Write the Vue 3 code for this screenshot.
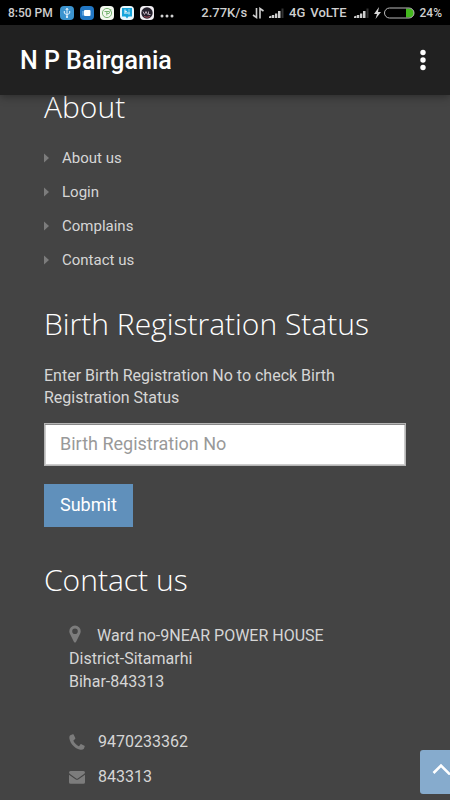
<script setup>
import { ref } from 'vue'

const registrationNo = ref('')
const links = ['About us', 'Login', 'Complains', 'Contact us']
</script>

<template>
  <div class="screen">
    <div class="status-bar">
      <div class="status-left">
        <span class="clock">8:50 PM</span>
        <svg class="app-icon" viewBox="0 0 14 14">
          <rect width="14" height="14" rx="4" fill="#3c94cf" />
          <path d="M7 11.5V2.5M5.8 4 7 2.2 8.2 4M4.3 5v2c0 1 2.7 1 2.7 2.2M9.7 5v2c0 1-2.7 1-2.7 2.2" fill="none" stroke="#e8f5ff" stroke-width="1" />
          <circle cx="7" cy="11" r="1.1" fill="#e8f5ff" />
        </svg>
        <svg class="app-icon" viewBox="0 0 14 14">
          <rect width="14" height="14" rx="4" fill="#2277c4" />
          <rect x="4" y="4" width="6.500" height="6" rx="1" fill="#fff" />
          <path d="M3 9.500V5" stroke="#9fd0f5" stroke-width="1" />
        </svg>
        <svg class="app-icon" viewBox="0 0 14 14">
          <rect width="14" height="14" rx="4" fill="#f3f8ef" />
          <circle cx="7" cy="7" r="4.600" fill="none" stroke="#79b574" stroke-width="1" />
          <path d="M4.500 5.500H9M6.800 5.500V9.500M6.800 7.500H9L11 3" fill="none" stroke="#79b574" stroke-width="1" />
        </svg>
        <svg class="app-icon" viewBox="0 0 14 14">
          <rect width="14" height="14" rx="4" fill="#e9f7fd" />
          <path d="M2 2h10v8.500H8.500L7 12.500 5.500 10.500H2z" fill="#16a5dc" />
          <path d="M5 3.500V8M5 6q2-1.500 2 .3V8M9 5.500V8.500M9 3.500v1" fill="none" stroke="#fff" stroke-width="1" />
        </svg>
        <svg class="app-icon" viewBox="0 0 14 14">
          <rect width="14" height="14" rx="4" fill="#f1eef2" />
          <circle cx="7" cy="7" r="5.700" fill="#25212d" />
          <path d="M3 5.500 4.500 8.500 6 5.500 7.500 8.500M8.500 5.500v3h2" fill="none" stroke="#b7a9b5" stroke-width="1" />
          <path d="M4 10.500q3 1.500 6 0" fill="none" stroke="#a64b58" stroke-width="1" />
        </svg>
        <svg class="more-dots" viewBox="0 0 14 14">
          <g fill="#d0d0d0"><circle cx="2" cy="10" r="1.500" /><circle cx="7" cy="10" r="1.500" /><circle cx="12" cy="10" r="1.500" /></g>
        </svg>
      </div>
      <div class="status-right">
        <span class="network">2.77K/s</span>
        <svg class="arrows" viewBox="0 0 12 12">
          <path d="M4.500 1V10.500L1 8M8 11.500V1.500L11.500 4" fill="none" stroke="#cfcfcf" stroke-width="1.600" />
        </svg>
        <svg class="signal" viewBox="0 0 15 12">
          <path d="M0 9.500 2.500 8.500V11H0zM3 8h2.300v3H3zM6 6.500h2.300V11H6zM9 4h2.500v7H9z" fill="#cfcfcf" />
          <path d="M12.500 1.500h2V11h-2z" fill="#333" />
        </svg>
        <span class="network">4G</span>
        <span class="network">VoLTE</span>
        <svg class="signal second" viewBox="0 0 15 12">
          <path d="M0 9.500 2.500 8.500V11H0zM3 8h2.300v3H3zM6 6.500h2.300V11H6zM9 4h2.500v7H9z" fill="#cfcfcf" />
          <path d="M12.500 1.500h2V11h-2z" fill="#333" />
        </svg>
        <svg class="battery" viewBox="0 0 41 12">
          <path d="M5 0 0 7h3L1.500 12 7 5H4z" fill="#d8d8d8" />
          <path d="M32 1.500h3.500a4.500 4.500 0 0 1 0 9H32z" fill="#43b81d" />
          <rect x="10.500" y="1" width="29.500" height="10" rx="5" fill="none" stroke="#b9b9b9" stroke-width="1" />
        </svg>
        <span>24%</span>
      </div>
    </div>

    <header class="app-bar">
      <div class="app-title">N P Bairgania</div>
      <button class="menu-button" type="button" aria-label="More options">
        <svg viewBox="0 0 6 22">
          <g fill="#fff"><circle cx="3" cy="3.500" r="2.700" /><circle cx="3" cy="11" r="2.700" /><circle cx="3" cy="18.500" r="2.700" /></g>
        </svg>
      </button>
    </header>

    <main class="content">
      <section>
        <h2>About</h2>
        <ul class="links">
          <li v-for="link in links" :key="link">
            <svg class="caret" viewBox="0 0 5 10"><path d="M0 0.500 5 5 0 9.500z" fill="#7c7c7c" /></svg>
            <a href="#">{{ link }}</a>
          </li>
        </ul>
      </section>

      <section>
        <h2>Birth Registration Status</h2>
        <form class="status-form" @submit.prevent>
          <label for="registration-no">Enter Birth Registration No to check Birth Registration Status</label>
          <input id="registration-no" v-model="registrationNo" type="text" placeholder="Birth Registration No" />
          <button class="submit" type="submit">Submit</button>
        </form>
      </section>

      <section>
        <h2>Contact us</h2>
        <address class="contact">
          <p class="place">
            <svg class="pin" viewBox="0 0 12 18">
              <path fill-rule="evenodd" d="M6 0.500a5.700 5.700 0 0 0-5.700 5.700c0 1 .2 1.700.6 2.500L5 17q1 1.200 2 0l4.100-8.300c.4-.8.6-1.500.6-2.500A5.700 5.700 0 0 0 6 .5zM6 3.400a2.800 2.800 0 1 1 0 5.600 2.800 2.800 0 0 1 0-5.600z" fill="#7c7c7c" />
            </svg>Ward no-9NEAR POWER HOUSE<br />District-Sitamarhi<br />Bihar-843313
          </p>
          <p class="contact-row">
            <svg viewBox="0 0 16 16">
              <path d="M3.700.3 1.300 1.300C.5 2 .2 3 .4 4.500c.6 3 2 5.500 4.100 7.500 2.200 2.100 4.400 3.300 7 3.700 1.500.2 2.700-.2 3.400-1l.8-2.100c.1-.4 0-.6-.3-.8l-3-1.600c-.4-.2-.7-.1-1 .2l-1.200 1.500c-.3.3-.6.300-.9.1-2-1-3.900-2.900-4.800-4.900-.2-.4-.1-.6.200-.9L6.100 5c.3-.3.3-.6.200-.9L4.600.6C4.400.3 4.100.1 3.700.3z" fill="#7c7c7c" />
            </svg>
            <span>9470233362</span>
          </p>
          <p class="contact-row">
            <svg viewBox="0 0 16 16">
              <path d="M1.500 2h13Q16 2 16 3.500q0 .9-1 1.600L8.800 9.400q-.8.5-1.600 0L1 5.100Q0 4.400 0 3.500 0 2 1.500 2z" fill="#7c7c7c" />
              <path d="M0 5.700 6.800 10.400q1.200.8 2.400 0L16 5.700v7.600q0 1.500-1.500 1.500h-13Q0 14.800 0 13.300z" fill="#7c7c7c" />
            </svg>
            <span>843313</span>
          </p>
        </address>
      </section>
    </main>

    <button class="to-top" type="button" aria-label="Back to top">
      <svg viewBox="0 0 18 12"><path d="M1.500 10 9 2.500 18 11.500" fill="none" stroke="#fff" stroke-width="2.600" /></svg>
    </button>
  </div>
</template>

<style>
body {
  margin: 0;
  background: #444;
  overflow: hidden;
}
</style>

<style scoped>
.screen {
  position: relative;
  min-height: 100vh;
  background: #444;
  color: #d6d6d6;
  font-family: Roboto, "Liberation Sans", sans-serif;
  font-size: 16px;
  line-height: 22px;
}

.status-bar {
  display: flex;
  align-items: center;
  justify-content: space-between;
  height: 25px;
  padding: 0 8px;
  background: #000;
  color: #cfcfcf;
  font-size: 12px;
  font-weight: 500;
}

.status-left {
  display: flex;
  align-items: center;
  gap: 6px;
}

.status-right {
  display: flex;
  align-items: center;
  gap: 5px;
}

.network {
  font-size: 13px;
}

.clock {
  margin-right: 1px;
}

.app-icon,
.more-dots {
  width: 14px;
  height: 14px;
}

.arrows {
  width: 12px;
  height: 12px;
}

.signal {
  width: 15px;
  height: 12px;
}

.signal.second {
  margin-left: 2px;
}

.battery {
  width: 41px;
  height: 12px;
}

.app-bar {
  position: relative;
  display: flex;
  align-items: center;
  justify-content: space-between;
  height: 70px;
  padding: 0 20px;
  background: #212121;
  box-shadow: 0 2px 8px rgba(0, 0, 0, 0.35);
}

.app-title {
  padding-top: 2px;
  color: #fff;
  font-size: 25px;
  font-weight: 500;
  line-height: 32px;
}

.menu-button {
  display: flex;
  padding: 0 4px;
  border: 0;
  background: none;
}

.menu-button svg {
  width: 6px;
  height: 22px;
}

.content {
  padding: 0 44px;
}

h2 {
  margin: 0;
  color: #fff;
  font-family: "Open Sans", sans-serif;
  font-size: 30px;
  font-weight: 300;
  line-height: 34px;
}

section + section {
  padding-top: 36px;
}

.content section:first-child h2 {
  line-height: 24px;
}

.links {
  display: grid;
  gap: 12px;
  margin: 0;
  padding: 28px 0 0;
  font-size: 15px;
  list-style: none;
}

.links li {
  display: flex;
  align-items: center;
  gap: 13px;
}

.links a {
  color: inherit;
  text-decoration: none;
}

.caret {
  width: 5px;
  height: 10px;
}

.status-form {
  display: flex;
  flex-direction: column;
  align-items: flex-start;
  padding-top: 24px;
}

.status-form input {
  box-sizing: border-box;
  width: 100%;
  height: 43px;
  margin: 14px 0 18px;
  padding: 0 15px 2px;
  border: 1px solid #b5b5b5;
  border-radius: 0;
  background: #fff;
  box-shadow: inset 0 1px 0 #888, inset 0 0 0 1px #ccc;
  color: #444;
  font: inherit;
  font-size: 18px;
}

.status-form input::placeholder {
  color: #999;
  opacity: 1;
}

.submit {
  height: 43px;
  padding: 0 16px 2px;
  border: 0;
  background: #6090bb;
  color: #fff;
  font: inherit;
  font-size: 18px;
}

.contact {
  display: grid;
  gap: 13px;
  padding: 27px 0 10px 25px;
  font-style: normal;
}

.contact p {
  margin: 0;
}

.contact .place {
  padding-bottom: 25px;
  line-height: 23px;
}

.pin {
  width: 12px;
  height: 18px;
  margin-right: 16px;
  vertical-align: -2px;
}

.contact-row {
  display: flex;
  align-items: center;
  gap: 13px;
}

.contact-row svg {
  width: 16px;
  height: 16px;
}

.to-top {
  position: fixed;
  right: 0;
  bottom: 6px;
  display: flex;
  align-items: center;
  justify-content: flex-end;
  width: 30px;
  height: 44px;
  padding: 0 0 6px;
  overflow: hidden;
  border: 0;
  border-radius: 3px 0 0 3px;
  background: #86abcd;
}

.to-top svg {
  flex: none;
  width: 18px;
  height: 12px;
}
</style>
